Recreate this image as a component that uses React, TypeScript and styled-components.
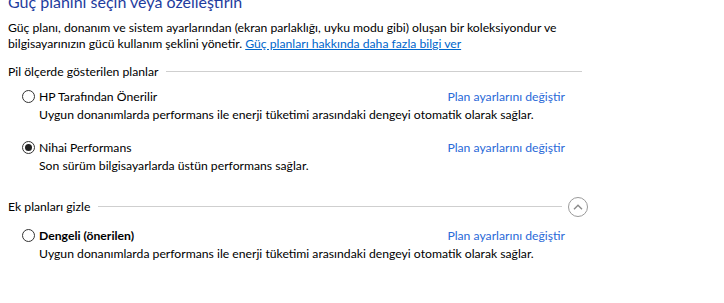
import React from "react";
import styled, { createGlobalStyle } from "styled-components";

const Global = createGlobalStyle`
  html, body { margin: 0; padding: 0; background: #ffffff; }
  body {
    font-family: Lato, "Noto Sans", sans-serif;
    font-size: 12.2px;
    color: #000;
    overflow: hidden;
  }
`;

const Page = styled.div`
  padding: 0 8px;
  width: 724px;
  height: 303px;
  box-sizing: border-box;
`;

const Title = styled.h1`
  margin: -8px 0 0 0;
  font-size: 16px;
  line-height: 20px;
  font-weight: 400;
  color: #1e3c9e;
`;

const Intro = styled.p`
  margin: 8px 0 0 0;
  line-height: 16px;
`;

const Link = styled.a`
  color: #0066cc;
  text-decoration: underline;
  cursor: pointer;
`;

const SectionHeader = styled.div<{ $width: number; $top: number }>`
  display: flex;
  align-items: center;
  width: ${(p) => p.$width}px;
  margin-top: ${(p) => p.$top}px;
  height: 15px;
  line-height: 15px;
`;

const SectionLabel = styled.span`
  white-space: nowrap;
  margin-right: 8px;
`;

const Rule = styled.div`
  flex: 1;
  height: 1px;
  background: #cfcfcf;
`;

const Chevron = styled.button`
  margin-left: 6px;
  width: 20px;
  height: 20px;
  padding: 0;
  border: 1.5px solid #9a9a9a;
  border-radius: 50%;
  background: #fff;
  display: flex;
  align-items: center;
  justify-content: center;
  box-sizing: border-box;
`;

const Plans = styled.div<{ $top: number }>`
  margin: ${(p) => p.$top}px 0 0 14px;
  width: 543px;
  display: flex;
  flex-direction: column;
  gap: 18px;
`;

const Plan = styled.div`
  display: flex;
  flex-direction: column;
  gap: 3px;
  line-height: 15px;
`;

const PlanHead = styled.div`
  display: flex;
  align-items: center;
  height: 15px;
`;

const Radio = styled.span<{ $checked?: boolean }>`
  width: 13px;
  height: 13px;
  margin-right: 4px;
  border: 1px solid #333;
  border-radius: 50%;
  box-sizing: border-box;
  display: flex;
  align-items: center;
  justify-content: center;
  flex-shrink: 0;
  &::after {
    content: "";
    display: ${(p) => (p.$checked ? "block" : "none")};
    width: 7px;
    height: 7px;
    border-radius: 50%;
    background: #222;
  }
`;

const PlanName = styled.span<{ $bold?: boolean }>`
  flex: 1;
  font-weight: ${(p) => (p.$bold ? 700 : 400)};
`;

const PlanLink = styled.a`
  color: #2a6ad8;
  text-decoration: none;
  cursor: pointer;
`;

const PlanDesc = styled.span`
  padding-left: 17px;
  white-space: nowrap;
`;

type PlanData = { name: string; desc: string; checked?: boolean; bold?: boolean };

const PlanRow = ({ p }: { p: PlanData }) => (
  <Plan>
    <PlanHead>
      <Radio $checked={p.checked} />
      <PlanName $bold={p.bold}>{p.name}</PlanName>
      <PlanLink>Plan ayarlarını değiştir</PlanLink>
    </PlanHead>
    <PlanDesc>{p.desc}</PlanDesc>
  </Plan>
);

const balanced =
  "Uygun donanımlarda performans ile enerji tüketimi arasındaki dengeyi otomatik olarak sağlar.";

export default function App() {
  return (
    <Page>
      <Global />
      <Title>Güç planını seçin veya özelleştirin</Title>
      <Intro>
        Güç planı, donanım ve sistem ayarlarından (ekran parlaklığı, uyku modu gibi) oluşan bir koleksiyondur ve
        <br />
        bilgisayarınızın gücü kullanım şeklini yönetir. <Link>Güç planları hakkında daha fazla bilgi ver</Link>
      </Intro>
      <SectionHeader $width={574} $top={12}>
        <SectionLabel>Pil ölçerde gösterilen planlar</SectionLabel>
        <Rule />
      </SectionHeader>
      <Plans $top={10}>
        <PlanRow p={{ name: "HP Tarafından Önerilir", desc: balanced }} />
        <PlanRow
          p={{ name: "Nihai Performans", desc: "Son sürüm bilgisayarlarda üstün performans sağlar.", checked: true }}
        />
      </Plans>
      <SectionHeader $width={580} $top={26}>
        <SectionLabel>Ek planları gizle</SectionLabel>
        <Rule />
        <Chevron aria-label="Gizle">
          <svg width="10" height="6" viewBox="0 0 10 6">
            <path d="M1 5.2 L5 1.2 L9 5.2" fill="none" stroke="#8a8a8a" strokeWidth="1.4" />
          </svg>
        </Chevron>
      </SectionHeader>
      <Plans $top={14}>
        <PlanRow p={{ name: "Dengeli (önerilen)", desc: balanced, bold: true }} />
      </Plans>
    </Page>
  );
}
